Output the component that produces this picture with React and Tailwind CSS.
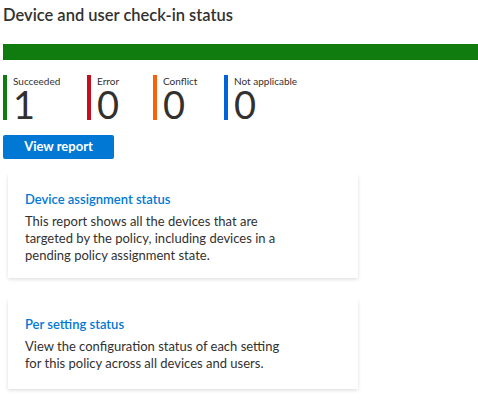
const STATS = [
  { label: "Succeeded", value: 1, bar: "bg-[#107c10]", width: "w-[84px]" },
  { label: "Error", value: 0, bar: "bg-[#c50f1f]", width: "w-[66px]" },
  { label: "Conflict", value: 0, bar: "bg-[#f7630c]", width: "w-[71px]" },
  { label: "Not applicable", value: 0, bar: "bg-[#0063d8]", width: "w-[90px]" },
];

function ReportCard({ title, children, height }) {
  return (
    <div className={`w-[350px] ${height} bg-white px-[17px] pt-[16px] shadow-[0_1.6px_3.6px_0_rgba(0,0,0,0.132),0_0.3px_0.9px_0_rgba(0,0,0,0.108)]`}>
      <h3 className="text-[13px] leading-[18px] font-semibold text-[#0078d4]">{title}</h3>
      <p className="mt-[5px] max-w-[270px] text-[13px] leading-[17px] text-[#323130]">{children}</p>
    </div>
  );
}

export default function App() {
  return (
    <div className="min-h-[402px] bg-white pl-[3px] pt-[4px] font-['Lato','Segoe_UI',sans-serif] text-[#323130]">
      <h2 className="text-[16.5px] leading-[22px] font-semibold">Device and user check-in status</h2>
      <div className="mt-[18px] h-[16px] bg-[#107c10]" />

      <div className="mt-[15px] flex">
        {STATS.map(s => (
          <div key={s.label} className={`flex h-[45px] ${s.width}`}>
            <div className={`w-[4px] shrink-0 ${s.bar}`} />
            <div className="pl-[6px]">
              <div className="text-[10px] leading-[13px]">{s.label}</div>
              <div className="text-[38px] leading-[32px]">{s.value}</div>
            </div>
          </div>
        ))}
      </div>

      <button className="mt-[15px] flex h-[24px] w-[111px] items-center justify-center rounded-[2px] bg-[#0078d4] text-[13px] font-bold text-white">
        View report
      </button>

      <div className="ml-[5px] mt-[15px] flex flex-col gap-[21px]">
        <ReportCard title="Device assignment status" height="h-[104px]">
          This report shows all the devices that are targeted by the policy, including devices in a pending policy assignment state.
        </ReportCard>
        <ReportCard title="Per setting status" height="h-[90px]">
          View the configuration status of each setting for this policy across all devices and users.
        </ReportCard>
      </div>
    </div>
  );
}
